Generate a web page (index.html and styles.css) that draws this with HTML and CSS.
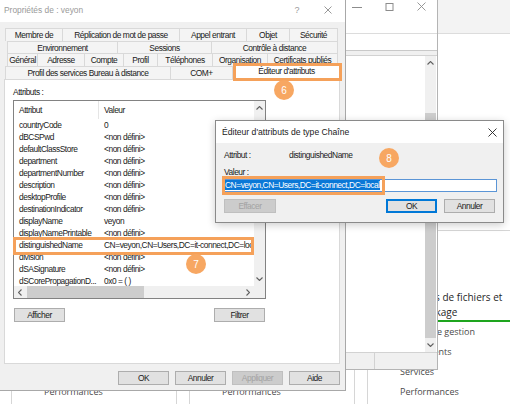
FILE: index.html
```html
<!DOCTYPE html>
<html lang="fr">
<head>
    <meta charset="UTF-8">
    <title>Propriétés de : veyon</title>
    <link rel="stylesheet" href="styles.css">
</head>
<body>
<div class="desk">

    <!-- server manager, behind the windows -->
    <div class="sm">
        <div class="sm-head"></div>
        <div class="tiles">
            <div class="tile">
                <div class="tile-title"></div>
                <div class="tile-item"></div>
                <div class="tile-item"></div>
                <div class="tile-item"></div>
                <div class="tile-item">Performances</div>
            </div>
            <div class="tile">
                <div class="tile-title"></div>
                <div class="tile-item"></div>
                <div class="tile-item"></div>
                <div class="tile-item"></div>
                <div class="tile-item">Performances</div>
            </div>
            <div class="tile">
                <div class="tile-title">Services de fichiers et<br>de stockage</div>
                <div class="tile-item">Facilité de gestion</div>
                <div class="tile-item">Événements</div>
                <div class="tile-item">Services</div>
                <div class="tile-item">Performances</div>
            </div>
        </div>
    </div>

    <!-- window behind the dialogs -->
    <div class="win back">
        <div class="back-title">
            <span class="ctl"><svg width="10" height="8" viewBox="0 0 10 8"><path d="M0 4.5H10" stroke="#8c8c8c" stroke-width="1"/></svg></span>
            <span class="ctl"><svg width="9" height="8" viewBox="0 0 9 8"><rect x="1" y="0.5" width="7" height="7" fill="none" stroke="#8c8c8c" stroke-width="1"/></svg></span>
            <span class="ctl"><svg width="9" height="9" viewBox="0 0 9 9"><path d="M0.5 0.5L8.5 8.5M8.5 0.5L0.5 8.5" stroke="#8c8c8c" stroke-width="0.9"/></svg></span>
        </div>
        <div class="back-tool"></div>
        <div class="back-sep"></div>
        <div class="back-list">
            <div class="back-scroll">
                <span class="arr"><svg width="7" height="4" viewBox="0 0 7 4"><path d="M0.5 3.5L3.5 0.5L6.5 3.5" fill="none" stroke="#606060" stroke-width="1.1"/></svg></span>
                <span class="thumb"></span>
                <span class="arr"><svg width="7" height="4" viewBox="0 0 7 4"><path d="M0.5 0.5L3.5 3.5L6.5 0.5" fill="none" stroke="#606060" stroke-width="1.1"/></svg></span>
            </div>
        </div>
        <div class="back-status"><span class="seg"></span><span class="seg last"></span></div>
    </div>

    <!-- Propriétés de : veyon -->
    <div class="win props">
        <div class="titlebar">
            <span class="title">Propriétés de : veyon</span>
            <span class="tb-help">?</span>
            <span class="tb-close"><svg width="8" height="8" viewBox="0 0 8 8"><path d="M0.5 0.5L7.5 7.5M7.5 0.5L0.5 7.5" stroke="#8c8c8c" stroke-width="0.9"/></svg></span>
        </div>

        <div class="tabs">
            <div class="tabrow r1">
                <span class="tab">Membre de</span>
                <span class="tab">Réplication de mot de passe</span>
                <span class="tab">Appel entrant</span>
                <span class="tab">Objet</span>
                <span class="tab">Sécurité</span>
            </div>
            <div class="tabrow r2">
                <span class="tab">Environnement</span>
                <span class="tab">Sessions</span>
                <span class="tab">Contrôle à distance</span>
            </div>
            <div class="tabrow r3">
                <span class="tab">Général</span>
                <span class="tab">Adresse</span>
                <span class="tab">Compte</span>
                <span class="tab">Profil</span>
                <span class="tab">Téléphones</span>
                <span class="tab">Organisation</span>
                <span class="tab">Certificats publiés</span>
            </div>
            <div class="tabrow r4">
                <span class="tab">Profil des services Bureau à distance</span>
                <span class="tab">COM+</span>
                <span class="tab active">Éditeur d'attributs</span>
            </div>
        </div>

        <div class="page">
            <div class="lbl">Attributs :</div>
            <div class="list">
                <div class="lv">
                    <div class="lv-head"><span class="c1">Attribut</span><span class="c2">Valeur</span></div>
                    <div class="lv-row"><span class="c1">countryCode</span><span class="c2">0</span></div>
                    <div class="lv-row"><span class="c1">dBCSPwd</span><span class="c2">&lt;non défini&gt;</span></div>
                    <div class="lv-row"><span class="c1">defaultClassStore</span><span class="c2">&lt;non défini&gt;</span></div>
                    <div class="lv-row"><span class="c1">department</span><span class="c2">&lt;non défini&gt;</span></div>
                    <div class="lv-row"><span class="c1">departmentNumber</span><span class="c2">&lt;non défini&gt;</span></div>
                    <div class="lv-row"><span class="c1">description</span><span class="c2">&lt;non défini&gt;</span></div>
                    <div class="lv-row"><span class="c1">desktopProfile</span><span class="c2">&lt;non défini&gt;</span></div>
                    <div class="lv-row"><span class="c1">destinationIndicator</span><span class="c2">&lt;non défini&gt;</span></div>
                    <div class="lv-row"><span class="c1">displayName</span><span class="c2">veyon</span></div>
                    <div class="lv-row"><span class="c1">displayNamePrintable</span><span class="c2">&lt;non défini&gt;</span></div>
                    <div class="lv-row"><span class="c1">distinguishedName</span><span class="c2 clip">CN=veyon,CN=Users,DC=it-connect,DC=loc</span></div>
                    <div class="lv-row"><span class="c1">division</span><span class="c2">&lt;non défini&gt;</span></div>
                    <div class="lv-row"><span class="c1">dSASignature</span><span class="c2">&lt;non défini&gt;</span></div>
                    <div class="lv-row"><span class="c1">dSCorePropagationD...</span><span class="c2">0x0 = ( )</span></div>
                </div>
                <div class="vscroll">
                    <span class="arr"><svg width="7" height="4" viewBox="0 0 7 4"><path d="M0.5 3.5L3.5 0.5L6.5 3.5" fill="none" stroke="#606060" stroke-width="1.1"/></svg></span>
                    <span class="arr"><svg width="7" height="4" viewBox="0 0 7 4"><path d="M0.5 0.5L3.5 3.5L6.5 0.5" fill="none" stroke="#606060" stroke-width="1.1"/></svg></span>
                </div>
                <div class="hscroll">
                    <span class="arr"><svg width="4" height="7" viewBox="0 0 4 7"><path d="M3.5 0.5L0.5 3.5L3.5 6.5" fill="none" stroke="#606060" stroke-width="1.1"/></svg></span>
                    <span class="thumb"></span>
                    <span class="arr"><svg width="4" height="7" viewBox="0 0 4 7"><path d="M0.5 0.5L3.5 3.5L0.5 6.5" fill="none" stroke="#606060" stroke-width="1.1"/></svg></span>
                </div>
                <div class="corner"></div>
            </div>
            <div class="page-btns">
                <button class="btn">Afficher</button>
                <button class="btn">Filtrer</button>
            </div>
        </div>

        <div class="dlg-btns">
            <button class="btn">OK</button>
            <button class="btn">Annuler</button>
            <button class="btn off">Appliquer</button>
            <button class="btn">Aide</button>
        </div>
    </div>

    <!-- Éditeur d'attributs de type Chaîne -->
    <div class="win chaine">
        <div class="ch-title">
            <span class="title">Éditeur d'attributs de type Chaîne</span>
            <span class="ch-close"><svg width="9" height="9" viewBox="0 0 9 9"><path d="M0.5 0.5L8.5 8.5M8.5 0.5L0.5 8.5" stroke="#222" stroke-width="0.9"/></svg></span>
        </div>
        <div class="ch-body">
            <div class="ch-row"><span class="ch-key">Attribut :</span><span>distinguishedName</span></div>
            <div class="ch-lbl">Valeur :</div>
            <div class="ch-input"><span class="sel">CN=veyon,CN=Users,DC=it-connect,DC=local</span></div>
            <div class="ch-btns">
                <button class="btn off wide">Effacer</button>
                <button class="btn def">OK</button>
                <button class="btn">Annuler</button>
            </div>
        </div>
    </div>

    <!-- annotations -->
    <div class="mark m6"></div>
    <div class="mark m7"></div>
    <div class="mark m8"></div>
    <div class="dot d6">6</div>
    <div class="dot d7">7</div>
    <div class="dot d8">8</div>

</div>
</body>
</html>
```

FILE: styles.css
```css
* {
    box-sizing: border-box;
}

body {
    margin: 0;
    background: #fff;
    font-family: "Liberation Sans", Arial, sans-serif;
    font-size: 8.4px;
    letter-spacing: -0.45px;
    color: #1a1a1a;
}

.desk {
    position: relative;
    width: 510px;
    height: 404px;
    overflow: hidden;
}

/* ---------- server manager ---------- */

.sm {
    position: absolute;
    top: 0;
    left: 0;
    width: 510px;
    height: 404px;
    font-family: "Open Sans", sans-serif;
    letter-spacing: 0;
    color: #4a4a4a;
}

.sm-head {
    height: 34px;
    background: #f3f3f3;
    border-bottom: 1px solid #dcdcdc;
}

.tiles {
    display: flex;
    gap: 12px;
    margin: 196px 0 0 11px;
}

.tile {
    flex: none;
    width: 166px;
    height: 190px;
    border: 1px solid #d6d6d6;
    border-bottom: none;
}

.tile-title {
    height: 32px;
    margin-top: 59px;
    padding-left: 34px;
    font-size: 10px;
    line-height: 15px;
    color: #262626;
    white-space: nowrap;
    border-bottom: 2px solid #1ea51e;
}

.tile-item {
    height: 20px;
    padding-left: 32px;
    font-size: 9px;
    line-height: 20px;
    white-space: nowrap;
}

/* ---------- windows ---------- */

.win {
    position: absolute;
    overflow: hidden;
}

.back {
    left: 150px;
    top: 0;
    width: 288px;
    height: 370px;
    background: #fff;
    border-right: 1px solid #b4b4b4;
    border-bottom: 1px solid #b4b4b4;
    display: flex;
    flex-direction: column;
}

.back-title {
    height: 34px;
    flex: none;
    display: flex;
    justify-content: flex-end;
    align-items: flex-start;
    border-bottom: 1px solid #dcdcdc;
}

.ctl {
    width: 32px;
    height: 13px;
    display: flex;
    justify-content: center;
    align-items: center;
}

.back-tool {
    height: 17px;
    flex: none;
    border-bottom: 1px solid #c9c9c9;
}

.back-sep {
    height: 5px;
    flex: none;
    background: #f0f0f0;
    border-bottom: 1px solid #d2d2d2;
}

.back-list {
    flex: 1;
    display: flex;
    justify-content: flex-end;
    padding-right: 1px;
}

.back-scroll {
    width: 11px;
    display: flex;
    flex-direction: column;
    background: #f0f0f0;
}

.back-scroll .thumb {
    margin-top: auto;
    height: 225px;
    background: #cdcdcd;
}

.arr {
    flex: none;
    width: 11px;
    height: 14px;
    display: flex;
    justify-content: center;
    align-items: center;
}

.back-status {
    height: 17px;
    flex: none;
    display: flex;
    background: #f0f0f0;
    border-top: 1px solid #d2d2d2;
}

.back-status .seg {
    flex: 1;
    border-right: 1px solid #d2d2d2;
}

.back-status .seg.last {
    flex: none;
    width: 62px;
    border-right: none;
}

/* ---------- Propriétés de : veyon ---------- */

.props {
    left: 0;
    top: 0;
    width: 346px;
    height: 391px;
    background: #f0f0f0;
    border-right: 1px solid #a8a8a8;
    border-bottom: 1px solid #a8a8a8;
}

.titlebar {
    height: 22px;
    display: flex;
    align-items: center;
    padding: 0 11px 2px 4px;
    background: #fff;
    color: #9a9a9a;
    font-size: 8.4px;
    letter-spacing: 0;
}

.titlebar .title {
    flex: 1;
}

.tb-help {
    width: 10px;
    margin-right: 20px;
    text-align: center;
    font-size: 9px;
}

.tb-close {
    width: 12px;
    display: flex;
    justify-content: center;
}

.tabs {
    margin-top: 6px;
    display: grid;
    grid-template-rows: 13px 12px 13px 13px;
}

.tabrow {
    display: grid;
}

.r1 { margin-left: 5px; grid-template-columns: 58px 117px 67px 43px 48px; }
.r2 { margin-left: 7px; grid-template-columns: 111px 94px 126px; }
.r3 { margin-left: 7px; grid-template-columns: 31px 47px 39px 34px 55px 55px 70px; }
.r4 { margin-left: 5px; grid-template-columns: 166px 62px 108px; }

.tab {
    display: flex;
    justify-content: center;
    align-items: center;
    white-space: nowrap;
    overflow: hidden;
    background: #f4f4f4;
    border-top: 1px solid #d9d9d9;
    border-right: 1px solid #d9d9d9;
}

.tab:first-child {
    border-left: 1px solid #d9d9d9;
}

.tab.active {
    background: #fff;
    margin-top: -2px;
    margin-bottom: -1px;
    padding-bottom: 3px;
    position: relative;
}

.page {
    height: 285px;
    margin: 0 5px 0 4px;
    padding: 6px 8px 0;
    background: #fff;
    border: 1px solid #d9d9d9;
}

.lbl {
    height: 12px;
    line-height: 12px;
}

.list {
    width: 253px;
    height: 199px;
    margin-top: 2px;
    border: 1px solid #828282;
    display: grid;
    grid-template-columns: 1fr 11px;
    grid-template-rows: 1fr 12px;
}

.lv {
    overflow: hidden;
}

.lv-head {
    height: 18px;
    display: flex;
}

.lv-row {
    height: 12px;
    line-height: 12px;
    display: flex;
}

.c1 {
    flex: none;
    width: 85px;
    padding-left: 5px;
    overflow: hidden;
    white-space: nowrap;
}

.c2 {
    padding-left: 5px;
    white-space: nowrap;
}

.c2.clip {
    flex: 1;
    overflow: hidden;
}

.lv-head .c1,
.lv-head .c2 {
    display: flex;
    align-items: center;
}

.lv-head .c1 {
    border-right: 1px solid #e5e5e5;
}

.vscroll {
    display: flex;
    flex-direction: column;
    justify-content: space-between;
    background: #f0f0f0;
}

.hscroll {
    display: flex;
    background: #f0f0f0;
}

.hscroll .arr {
    width: 12px;
    height: 12px;
}

.hscroll .thumb {
    width: 117px;
    margin: 0 auto 0 1px;
    background: #cdcdcd;
}

.corner {
    background: #f0f0f0;
}

.page-btns {
    width: 253px;
    margin-top: 9px;
    padding: 0 1px;
    display: flex;
    justify-content: space-between;
}

.btn {
    width: 51px;
    height: 14px;
    padding: 0;
    font-family: inherit;
    font-size: 8.4px;
    letter-spacing: -0.45px;
    color: #1a1a1a;
    background: #e1e1e1;
    border: 1px solid #adadad;
}

.btn.off {
    color: #a3a3a3;
    background: #cccccc;
    border-color: #bfbfbf;
}

.btn.wide {
    width: 52px;
}

.btn.def {
    border-color: #0078d7;
    box-shadow: inset 0 0 0 1px #0078d7;
}

.dlg-btns {
    display: flex;
    justify-content: flex-end;
    gap: 6px;
    padding: 7px 5px 0 0;
}

/* ---------- Éditeur d'attributs de type Chaîne ---------- */

.chaine {
    left: 215px;
    top: 120px;
    width: 289px;
    height: 103px;
    background: #f0f0f0;
    border: 1px solid #8a8a8a;
    box-shadow: 0 2px 8px rgba(0, 0, 0, 0.2);
}

.ch-title {
    height: 22px;
    display: flex;
    align-items: center;
    padding: 0 5px 0 6px;
    background: #fff;
    font-size: 8.6px;
    letter-spacing: 0;
    color: #1a1a1a;
}

.ch-title .title {
    flex: 1;
}

.ch-close {
    width: 12px;
    display: flex;
    justify-content: center;
}

.ch-body {
    padding: 6px 8px 0 7px;
}

.ch-row {
    display: flex;
    line-height: 12px;
    padding-left: 1px;
}

.ch-key {
    width: 65px;
}

.ch-lbl {
    margin-top: 5px;
    padding-left: 1px;
    line-height: 12px;
}

.ch-input {
    width: 274px;
    height: 13px;
    margin-top: 1px;
    padding-left: 1px;
    line-height: 11px;
    background: #fff;
    border: 1px solid #5b95d6;
    white-space: nowrap;
}

.sel {
    background: #0a78d7;
    color: #fff;
}

.ch-btns {
    display: flex;
    gap: 7px;
    margin-top: 7px;
    padding-left: 1px;
}

.ch-btns .def {
    margin-left: auto;
}

/* ---------- annotations ---------- */

.mark {
    position: absolute;
    border: 3px solid #f5a15a;
}

.m6 { left: 233px; top: 63px; width: 109px; height: 18px; }
.m7 { left: 13px; top: 237px; width: 241px; height: 18px; }
.m8 { left: 222px; top: 176px; width: 163px; height: 19px; }

.dot {
    position: absolute;
    width: 20px;
    height: 20px;
    border-radius: 50%;
    background: #f7a762;
    color: #fff;
    font-size: 10px;
    letter-spacing: 0;
    display: flex;
    justify-content: center;
    align-items: center;
}

.d6 { left: 274px; top: 80px; }
.d7 { left: 186px; top: 254px; }
.d8 { left: 379px; top: 148px; }
```
